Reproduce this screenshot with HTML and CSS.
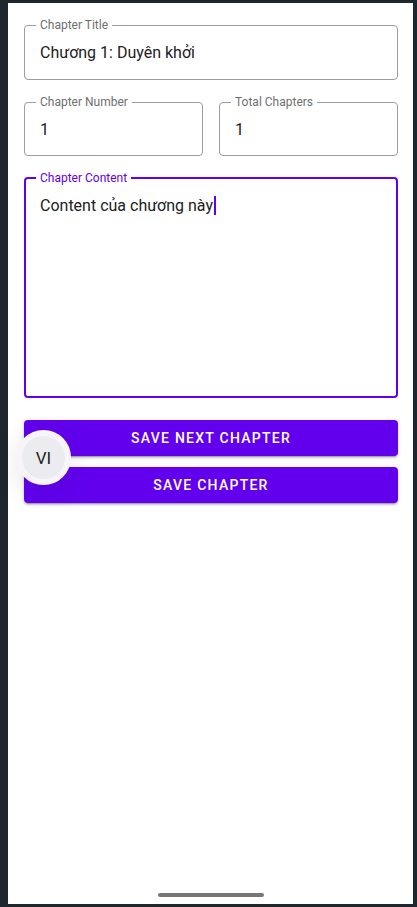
FILE: index.html
```html
<!DOCTYPE html>
<html lang="vi">
<head>
<meta charset="utf-8">
<meta name="viewport" content="width=device-width, initial-scale=1">
<title>Chapter editor</title>
<link rel="stylesheet" href="styles.css">
</head>
<body>
<div class="device">
  <div class="screen">
    <main class="form">
      <fieldset class="field field--title">
        <legend>Chapter Title</legend>
        <div class="value">Chương 1: Duyên khởi</div>
      </fieldset>
      <div class="row">
        <fieldset class="field">
          <legend>Chapter Number</legend>
          <div class="value">1</div>
        </fieldset>
        <fieldset class="field">
          <legend>Total Chapters</legend>
          <div class="value">1</div>
        </fieldset>
      </div>
      <fieldset class="field field--focused">
        <legend>Chapter Content</legend>
        <div class="value value--multiline">Content của chương này<span class="caret"></span></div>
      </fieldset>
      <div class="actions">
        <button class="btn" type="button">Save next chapter</button>
        <button class="btn" type="button">Save chapter</button>
        <div class="lang-fab">VI</div>
      </div>
    </main>
    <div class="home-indicator"></div>
  </div>
</div>
</body>
</html>
```

FILE: styles.css
```css
html, body {
  margin: 0;
  height: 100%;
}

body {
  background: #1f272e;
  font-family: Roboto, "Noto Sans", sans-serif;
}

.device {
  box-sizing: border-box;
  height: 907px;
  padding: 3px 4px 3px 8px;
}

.screen {
  background: #fff;
  height: 901px;
  display: flex;
  flex-direction: column;
}

.form {
  flex: 1;
  padding: 15px 15px 0 16px;
  display: flex;
  flex-direction: column;
  gap: 15px;
}

.row {
  display: grid;
  grid-template-columns: 1fr 1fr;
  gap: 16px;
}

.field {
  margin: 0;
  min-width: 0;
  border: 1px solid #9e9e9e;
  border-radius: 4px;
  padding: 0 15px 13px;
}

.field--title {
  padding-bottom: 14px;
}

.field legend {
  font-size: 12px;
  line-height: 14px;
  color: #6f6f6f;
  padding: 0 4px;
  margin-left: -4px;
}

.value {
  margin-top: 9px;
  font-size: 16px;
  line-height: 24px;
  color: #212121;
}

.field--focused {
  border: 2px solid #6200ee;
  padding: 0 14px 12px;
}

.field--focused legend {
  color: #6200ee;
}

.value--multiline {
  height: 190px;
}

.caret {
  display: inline-block;
  width: 2px;
  height: 19px;
  background: #6200ee;
  vertical-align: -4px;
  margin-left: 1px;
}

.actions {
  position: relative;
  margin-top: 7px;
  display: flex;
  flex-direction: column;
  gap: 11px;
}

.btn {
  height: 36px;
  border: 0;
  border-radius: 4px;
  background: #6200ee;
  color: #fff;
  font-family: Roboto, "Noto Sans", sans-serif;
  font-weight: 500;
  font-size: 14px;
  line-height: 16px;
  letter-spacing: 1.25px;
  text-transform: uppercase;
  box-shadow: 0 3px 1px -2px rgba(0, 0, 0, 0.2), 0 2px 2px 0 rgba(0, 0, 0, 0.14), 0 1px 5px 0 rgba(0, 0, 0, 0.12);
}

.lang-fab {
  position: absolute;
  left: -8px;
  top: 10px;
  box-sizing: border-box;
  width: 55px;
  height: 55px;
  border-radius: 50%;
  background: #ececf0;
  border: 6px solid #f7f5fb;
  box-shadow: 0 6px 30px rgba(0, 0, 0, 0.1);
  display: flex;
  align-items: center;
  justify-content: center;
  font-size: 17px;
  color: #1f1f1f;
}

.home-indicator {
  width: 106px;
  height: 4px;
  border-radius: 2px;
  background: #777;
  margin: 0 auto 7px;
}
```
